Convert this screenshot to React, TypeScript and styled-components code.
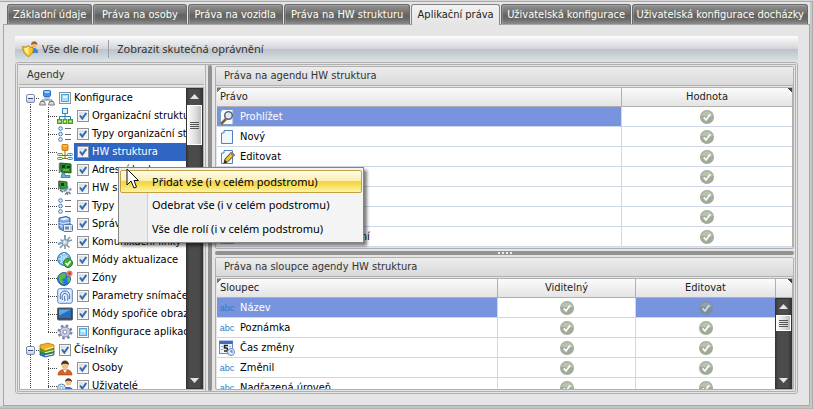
import React, { useEffect, useRef } from "react";
import styled, { createGlobalStyle, css } from "styled-components";

const line = "#b0b0b0";
const gridLine = "#cdd7e8";
const selected = "#7994de";

const GlobalStyle = createGlobalStyle`
  *, *::before, *::after { box-sizing: border-box; }
  body { margin: 0; background: #d2d2d2; }
  body, button, input { font: 11px/14px "DejaVu Sans Condensed", "DejaVu Sans", sans-serif; color: #000; }
  button { border: 0; padding: 0; background: none; }
`;

const Page = styled.div`
  height: 100vh;
  display: flex;
  flex-direction: column;
  padding: 3px 3px 3px;
  background: #e5e5e5;
  border: solid #d6d6d6;
  border-width: 1px 0 0 0;
  box-shadow: inset 0 1px #a9a9a9, inset -1px 0 #a9a9a9, inset 0 -1px #b5b5b5, inset -3px 0 #c8c8c8, inset 0 -3px #c4c4c4;
`;

const Tabs = styled.nav`
  display: flex;
  gap: 1px;
  height: 20px;
  flex: none;
  padding: 0 2px 0 4px;
`;

const Tab = styled.button<{ $weight: number; $active?: boolean }>`
  flex: ${(p) => p.$weight} 1 0;
  min-width: 0;
  white-space: nowrap;
  border: 1px solid #6a6a6a;
  border-bottom: 0;
  border-radius: 3px 3px 0 0;
  color: #fffff2;
  background: linear-gradient(#909090, #777 35%, #626262 55%, #6a6a6a 75%, #8c8c8c);
  box-shadow: inset 1px 1px rgba(255, 255, 255, 0.18);
  ${(p) =>
    p.$active &&
    css`
      margin-bottom: -1px;
      z-index: 1;
      color: #222;
      border-color: #858585;
      background: linear-gradient(#f2f2f2, #e5e5e5);
      box-shadow: none;
    `}
`;

const Content = styled.main`
  flex: 1;
  min-height: 0;
  display: flex;
  flex-direction: column;
  padding: 11px 11px;
  border: 1px solid #a6a6a6;
`;

const Toolbar = styled.div`
  height: 26px;
  flex: none;
  display: flex;
  align-items: center;
  padding: 0 7px;
  background: linear-gradient(#fcfcfc, #d2d4d9 50%, #bbc3cb 51%, #dce4e7);
`;

const ToolButton = styled.button`
  display: flex;
  align-items: center;
  gap: 4px;
  color: #333;
  font: 11px/16px "Noto Sans", sans-serif;
`;

const ToolDivider = styled.span`
  width: 1px;
  height: 18px;
  margin: 0 8px 0 10px;
  background: #98a0a8;
`;

const Split = styled.div`
  flex: 1;
  min-height: 0;
  display: flex;
  border: 3px double ${line};
  border-radius: 3px;
`;

const Sidebar = styled.section`
  width: 188px;
  flex: none;
  display: flex;
  flex-direction: column;
  padding: 1px 1px 1px;
  border-right: 1px solid ${line};
`;

const Caption = styled.h2`
  margin: 0;
  flex: none;
  height: 19px;
  padding: 0 8px;
  font-size: 11px;
  font-weight: normal;
  line-height: 18px;
  color: #333;
  background: linear-gradient(#ececec, #d9d9d9);
  border-bottom: 1px solid ${line};
`;

const VerticalSplitter = styled.div`
  width: 4px;
  flex: none;
  margin: 0 3px 0 2px;
  background: #919191;
  border-radius: 2px;
`;

const HorizontalSplitter = styled.div`
  flex: none;
  height: 4px;
  margin: 2px 0;
  display: flex;
  justify-content: center;
  align-items: center;
  gap: 2px;
  background: #929290;
  border-radius: 2px;
`;

const Grip = styled.i`
  width: 2px;
  height: 2px;
  background: #f0f0f0;
`;

const TreeFrame = styled.div`
  flex: 1;
  min-height: 0;
  display: flex;
  margin-top: 2px;
  border: 1px solid ${line};
  background: #fff;
`;

const Tree = styled.ul`
  flex: 1;
  min-width: 0;
  margin: 0;
  padding: 1px 0 0 1px;
  overflow: hidden;
  list-style: none;
`;

const TreeRow = styled.li`
  display: flex;
  align-items: center;
  height: 18px;
`;

const dots = "repeating-linear-gradient(#444 0 1px, transparent 1px 2px)";
const dotsAcross = "repeating-linear-gradient(90deg, #444 0 1px, transparent 1px 2px)";

const Guide = styled.span<{ $branch?: boolean; $last?: boolean; $first?: boolean }>`
  flex: none;
  width: 18px;
  height: 18px;
  display: grid;
  place-items: center;
  background-repeat: no-repeat;
  background-image: ${dots}, ${(p) => (p.$branch ? dotsAcross : "none")};
  background-size: 1px ${(p) => (p.$last || p.$first ? "9px" : "18px")}, 9px 1px;
  background-position: 9px ${(p) => (p.$first ? "9px" : "0")}, 9px 9px;
`;

const Toggle = styled.button`
  width: 9px;
  height: 9px;
  border: 1px solid #7e8bab;
  border-radius: 2px;
  display: grid;
  place-items: center;
  background: linear-gradient(#fff, #c8cfdd);
  &::after {
    content: "";
    width: 5px;
    height: 1px;
    background: #3d4f7c;
  }
`;

const TreeLabel = styled.label<{ $selected?: boolean }>`
  flex: 1;
  min-width: 0;
  height: 18px;
  margin-left: 1px;
  padding-left: 3px;
  display: flex;
  align-items: center;
  gap: 3px;
  white-space: nowrap;
  overflow: hidden;
  color: ${(p) => (p.$selected ? "#fff" : "#000")};
  background: ${(p) => (p.$selected ? "#2f66c4" : "transparent")};
`;

const CheckWrap = styled.span`
  flex: none;
  display: grid;
  width: 12px;
  height: 12px;
  & > * { grid-area: 1 / 1; }
  & > svg { pointer-events: none; }
`;

const CheckInput = styled.input`
  appearance: none;
  width: 12px;
  height: 12px;
  margin: 0;
  border: 1px solid #8e9298;
  background: linear-gradient(135deg, #d6d8dc, #fbfbfb);
  box-shadow: inset 0 0 0 1px #f6f6f6;
`;

const ScrollBar = styled.div`
  width: 17px;
  flex: none;
  display: flex;
  flex-direction: column;
  align-items: stretch;
  background: linear-gradient(90deg, #3a3a3a, #4b4b4b 15%, #4b4b4b 80%, #353535);
  border: 1px solid #333;
`;

const ArrowButton = styled.button<{ $down?: boolean }>`
  height: 15px;
  flex: none;
  display: grid;
  place-items: center;
  margin-top: ${(p) => (p.$down ? "auto" : "0")};
`;

const Thumb = styled.div<{ $size: number }>`
  height: ${(p) => p.$size}px;
  flex: none;
  display: flex;
  flex-direction: column;
  align-items: center;
  justify-content: center;
  gap: 1px;
  margin-top: 1px;
  border: 1px solid #fff;
  background: linear-gradient(90deg, #fafafa, #dcdcdc 60%, #bdbdbd);
`;

const ThumbLine = styled.i`
  width: 9px;
  height: 1px;
  background: #555;
`;

const Details = styled.div`
  flex: 1;
  min-width: 0;
  display: flex;
  flex-direction: column;
  padding: 1px 1px 1px 0;
`;

const Group = styled.section<{ $fill?: boolean }>`
  flex: ${(p) => (p.$fill ? "1 1 0" : "none")};
  min-height: 0;
  display: flex;
  flex-direction: column;
  padding-bottom: ${(p) => (p.$fill ? 0 : 1)}px;
  border: 1px solid ${line};
  border-radius: 2px;
`;

const TableFrame = styled.div`
  flex: 1;
  min-height: 0;
  display: flex;
  overflow: hidden;
  margin: 1px 0 0 1px;
  border-top: 1px solid ${line};
  border-right: 1px solid ${line};
  background: #fff;
`;

const Table = styled.table`
  flex: 1;
  width: 100%;
  height: max-content;
  border-collapse: separate;
  border-spacing: 0;
  table-layout: fixed;
`;

const headerFill = "linear-gradient(#fbfbfb, #e4e4e4)";

const cornerFill = "linear-gradient(225deg, #444 3px, transparent 3px)";

const Th = styled.th<{ $width?: number; $center?: boolean; $corner?: boolean }>`
  width: ${(p) => (p.$width ? `${p.$width}px` : "auto")};
  height: 19px;
  padding: 0 3px;
  font-weight: normal;
  text-align: ${(p) => (p.$center ? "center" : "left")};
  color: #222;
  background: ${(p) => (p.$corner ? `${cornerFill}, ${headerFill}` : headerFill)};
  border-bottom: 1px solid ${line};
  border-right: 1px solid ${line};
  &:first-child { background: linear-gradient(135deg, #777 3px, transparent 3px), ${headerFill}; }
  &:last-child { border-right: 0; }
`;

const Td = styled.td<{ $selected?: boolean }>`
  height: 20px;
  padding: 0;
  color: ${(p) => (p.$selected ? "#fff" : "#000")};
  background: ${(p) => (p.$selected ? selected : "#fff")};
  border-bottom: 1px solid ${gridLine};
  border-right: 1px solid ${gridLine};
  &:last-child { border-right: 0; }
`;

const NameCell = styled.div`
  display: flex;
  align-items: center;
  gap: 5px;
  padding-left: 2px;
  height: 19px;
  white-space: nowrap;
`;

const StatusCell = styled.div`
  display: flex;
  justify-content: center;
  align-items: center;
  height: 19px;
`;

const ScrollColumn = styled.div`
  flex: none;
  display: flex;
  flex-direction: column;
`;

const ScrollHead = styled.div`
  height: 19px;
  flex: none;
  background: ${cornerFill}, ${headerFill};
  border-left: 1px solid ${line};
  border-bottom: 1px solid ${line};
`;

const ScrollBody = styled.div`
  flex: 1;
  display: flex;
`;

const TypeMark = styled.span`
  width: 16px;
  text-align: center;
  font: 9px/12px "Liberation Sans", sans-serif;
  color: #2f7cc8;
`;

const Menu = styled.div`
  position: absolute;
  left: 118px;
  top: 167px;
  z-index: 5;
  padding: 2px 1px 1px;
  width: 246px;
  border: 1px solid #858585;
  background: linear-gradient(90deg, #ececec 28px, #cfcfcf 28px 29px, #f4f4f4 29px);
  box-shadow: 3px 3px 3px rgba(0, 0, 0, 0.5);
`;

const MenuItem = styled.button<{ $hot?: boolean }>`
  display: block;
  width: 100%;
  height: ${(p) => (p.$hot ? 23 : 24)}px;
  padding-left: 31px;
  text-align: left;
  white-space: nowrap;
  font: 11px/18px "Noto Sans", sans-serif;
  border: 1px solid transparent;
  border-radius: 2px;
  ${(p) =>
    p.$hot &&
    css`
      border-color: #c3a044;
      background: linear-gradient(#fffce8, #fbeeb4 45%, #f3d53c 50%, #f5dc55 65%, #fff3a4);
    `}
`;

const Pointer = styled.svg`
  position: absolute;
  left: 126px;
  top: 168px;
  z-index: 6;
`;

type IconName =
  | "network" | "org" | "types" | "hw" | "board" | "boardTool" | "server" | "links" | "update"
  | "globe" | "finger" | "screen" | "gear" | "books" | "person" | "users" | "roles"
  | "view" | "page" | "edit" | "time";

const drawings: Record<IconName, React.ReactNode> = {
  network: (
    <>
      <path d="M8 7v3M3 12v-2h10v2" stroke="#777" fill="none" />
      <rect x="4.5" y=".5" width="7" height="6" rx="1" fill="#3d93ee" stroke="#2b6dbb" />
      <path d="M5.500 2h5" stroke="#a8d6ff" strokeWidth="2" />
      <path d="M5 8h6" stroke="#b6c8dc" strokeWidth="2" />
      <path d="M1.500 11.500h4l1 3.500h-6zM10.500 11.500h4l1 3.500h-6z" fill="#ddd" stroke="#7b7b7b" />
    </>
  ),
  org: (
    <>
      <path d="M8 5v6M2.500 11V8.500h11V11" fill="none" stroke="#2d7cae" />
      <rect x="5.500" y=".5" width="5" height="5" fill="#dff1ff" stroke="#3583c3" />
      <path d="M.7 11.700h3.600v3.600H.7zM6.200 11.700h3.600v3.600H6.200zM11.700 11.700h3.600v3.600h-3.600z" fill="#e9ffd3" stroke="#4c9e16" strokeWidth="1.400" />
    </>
  ),
  types: (
    <>
      <g fill="#e6f2ff" stroke="#3d77b5">
        <circle cx="3.500" cy="2.500" r="1.800" /><circle cx="3.500" cy="8" r="1.800" /><circle cx="3.500" cy="13.500" r="1.800" />
      </g>
      <path d="M8 2.500h6M8 8.500h6M8 13.500h6" stroke="#6d6d6d" />
    </>
  ),
  hw: (
    <>
      <path d="M8 6v9M4 11.500h8M4 14.500h8" stroke="#8b6b2a" />
      <rect x="5" y=".5" width="6" height="6" rx="1" fill="#f5a21b" stroke="#cd7a08" />
      <path d="M6 2h4" stroke="#ffd685" />
      <rect x=".5" y="9.500" width="5" height="2" rx="1" fill="#e5ffd0" stroke="#4c9e16" />
      <rect x=".5" y="13.500" width="5" height="2" rx="1" fill="#e5ffd0" stroke="#4c9e16" />
      <rect x="10.500" y="9.500" width="5" height="2" rx="1" fill="#cdf5ff" stroke="#2496bb" />
      <rect x="10.500" y="13.500" width="5" height="2" rx="1" fill="#cdf5ff" stroke="#2496bb" />
    </>
  ),
  board: (
    <>
      <path d="M3 1l11 1v9L4 10z" fill="#25872c" stroke="#125e1b" />
      <path d="M5 3h3v3H5zM10 4h3v2h-3z" fill="#0b3e13" />
      <path d="M6 8h6" stroke="#a9db7b" />
      <path d="M2.500 1v10" stroke="#777" strokeWidth="1.500" />
      <path d="M5 11.500h3v2h5v2H4z" fill="#6cadcf" stroke="#3c6684" strokeWidth=".7" />
    </>
  ),
  boardTool: (
    <>
      <path d="M2 1l8 1v7L3 9z" fill="#38993b" stroke="#1b6a26" />
      <path d="M4 3h3v3H4z" fill="#0d4517" />
      <path d="M1.500 1v9" stroke="#777" />
      <path d="M3 10l3 2" stroke="#77a" strokeWidth="2" />
      <path d="M10.500 6v9M6.500 11l8-1.500M8 14.500l6-6M13.500 14l-5-6" stroke="#6d8498" strokeWidth="1.500" />
      <circle cx="11" cy="10.500" r="1.600" fill="#dcebf6" />
    </>
  ),
  server: (
    <>
      <path d="M2 2l7-1.500 4 1.500v11L6 14.500l-4-2z" fill="#7aa7e3" stroke="#39619d" />
      <path d="M2.500 3l4 1.500 6-1.500-4-1.500z" fill="#e6f0ff" />
      <path d="M2.500 6.500l4 1 6-1M2.500 9.500l4 1" stroke="#e1edff" fill="none" />
      <rect x="6.500" y="8.500" width="9" height="7" rx="1" fill="#e9edf4" stroke="#5874a0" />
      <path d="M8 10.500h4v3H8z" fill="#4d92e0" /><path d="M13 11h2M13 13h2" stroke="#e8a23f" />
    </>
  ),
  links: (
    <>
      <path d="M8 1v14M1 10l14-4M3 14l10-11M12.500 13.500l-9-8" stroke="#8496a6" strokeWidth="1.600" />
      <path d="M8 1v3M1 10l3-1" stroke="#63a7df" strokeWidth="2" />
      <circle cx="8" cy="8.500" r="3" fill="#bfd6e8" stroke="#7d95aa" /><circle cx="7.500" cy="8" r="1" fill="#fff" />
    </>
  ),
  update: (
    <>
      <circle cx="7" cy="7" r="6.400" fill="#68b4ea" stroke="#3471ab" />
      <path d="M1 7h12M7 1v12M3 3c3 3 5 3 8 0M3 11c3-3 5-3 8 0M7 1C3 4 3 10 7 13M7 1c4 3 4 9 0 12" fill="none" stroke="#e2f4ff" strokeWidth=".8" />
      <circle cx="11" cy="11" r="4.500" fill="#42ab3a" stroke="#247d25" />
      <path d="M8.500 11l2 2 3-4" stroke="#fff" fill="none" strokeWidth="1.600" />
    </>
  ),
  globe: (
    <>
      <circle cx="7" cy="9" r="6.400" fill="#2676d6" stroke="#1a549e" />
      <path d="M2 6c2-3 5-4 7-2l-1 4-3 1 2 4-2 1C2 12 1 9 2 6zM10 8l3-1v4l-2 2z" fill="#5cb947" />
      <circle cx="12.500" cy="3.500" r="3" fill="#ee7b64" /><circle cx="12.500" cy="3.500" r="1.200" fill="#c62e1c" />
    </>
  ),
  finger: (
    <>
      <rect x=".7" y=".7" width="14.600" height="14.600" rx="2" fill="#e2ecff" stroke="#5580bd" />
      <path d="M3.500 11c-1-5 1-8 4.500-8s5.500 3 4.500 8M5.500 12c-1-4 0-6.500 2.500-6.500s3.500 2.500 2.500 7M8 13c-.7-3-.7-5 0-5" fill="none" stroke="#3d68aa" />
    </>
  ),
  screen: (
    <>
      <rect x=".5" y="2" width="15" height="12" rx="1" fill="#384656" stroke="#56616e" />
      <path d="M2 3.500h12v8.500H2z" fill="#246fc0" /><path d="M2 3.500h12l-12 6z" fill="#63a6e6" />
    </>
  ),
  gear: (
    <>
      <circle cx="8" cy="8" r="6.300" fill="none" stroke="#7882a8" strokeWidth="2.400" strokeDasharray="2.500 2.450" />
      <circle cx="8" cy="8" r="5" fill="#ccd1e8" stroke="#8089ab" /><circle cx="8" cy="8" r="2" fill="#fff" stroke="#7e87ab" />
    </>
  ),
  books: (
    <>
      <path d="M1 9l9-2 5 2v4l-9 2-5-2z" fill="#2b78ba" stroke="#174e83" strokeWidth=".7" />
      <path d="M1 6l9-2 5 2v4l-9 2-5-2z" fill="#53a42e" stroke="#2d6e18" strokeWidth=".7" />
      <path d="M1 3l8-2 6 2v3L6 9 1 6z" fill="#eeb61d" stroke="#a66d0d" strokeWidth=".7" />
      <path d="M6 7.500l8.500-2.500M6 10.700l8.500-2M6 13.800l8.500-2" stroke="#fff6cf" />
    </>
  ),
  person: (
    <>
      <path d="M1 15c0-4 3-5.500 7-5.500s7 1.500 7 5.500z" fill="#d9622b" stroke="#a34018" strokeWidth=".6" />
      <path d="M6 9.500h4L8 13z" fill="#fff" />
      <circle cx="8" cy="5.500" r="3.500" fill="#f5c18b" /><path d="M4 5c0-6 8-6 8 0-2-1-5-2-8 0z" fill="#46342b" />
    </>
  ),
  users: (
    <>
      <path d="M6 13c0-3 2-4 5-4s5 1 5 4z" fill="#2f74c8" />
      <circle cx="11.500" cy="4.500" r="3" fill="#f5c18b" /><path d="M8 4c0-5 7-5 7 0-2-1-4-2-7 0z" fill="#553b26" />
      <circle cx="4.500" cy="10" r="4" fill="#cfe5f6" stroke="#5b8db9" /><circle cx="4.500" cy="10" r="1.500" fill="#fff" stroke="#7fa9cc" />
    </>
  ),
  roles: (
    <>
      <path d="M8 12c0-4 1-5 3.500-5S16 8 16 12z" fill="#3c85d8" />
      <circle cx="12" cy="4" r="2.700" fill="#f4bb80" /><path d="M9 4c0-5 6.500-5 6.500 0-2-1.500-4-1.500-6.500 0z" fill="#a3652a" />
      <path d="M.7 5.500C3 6.500 5 6 6.500 4.500 7.500 6 9 6.500 11 6.500c1 4-1 7-4.500 9C3 14 .5 10 .7 5.500z" fill="#f5c723" stroke="#b8860c" />
      <path d="M2 7c2 0 3-.5 4.500-1.500V14C4 12.500 2.500 10.500 2 7z" fill="#ffec8d" />
    </>
  ),
  view: (
    <>
      <path d="M3.500.5H14v15H1.500V3z" fill="#f5faff" stroke="#7c9fca" />
      <path d="M7 10l-5 5" stroke="#8e572a" strokeWidth="2.500" />
      <circle cx="9.500" cy="6.500" r="3.800" fill="#d5e9f8" stroke="#59636f" strokeWidth="1.500" />
      <path d="M7.500 6c0-1 1-2 2-2" stroke="#fff" fill="none" />
    </>
  ),
  page: <path d="M5 1.500h8.500v13h-11V4H5z" fill="#f1f7ff" stroke="#4e83be" strokeLinejoin="round" />,
  edit: (
    <>
      <path d="M5 1.500h8.500v13h-11V4H5z" fill="#f1f7ff" stroke="#4e83be" strokeLinejoin="round" />
      <path d="M5 14l1-4 6.500-7 3 3L8.500 13z" fill="#efc42a" stroke="#473c46" />
      <path d="M11 4.500l1.500-1.700 3 3L14 7.500z" fill="#8e75c0" /><path d="M5 14l1-3 2 2z" fill="#222" />
    </>
  ),
  time: (
    <>
      <rect x=".5" y="1" width="13" height="12.500" fill="#edf3ff" stroke="#668ac3" />
      <path d="M.5 2.500h13" stroke="#3c6dbe" strokeWidth="3" />
      <path d="M2 6.500h2M10 6.500h2M2 9.500h2" stroke="#90a9d0" />
      <path d="M9 5.500H5.500v2.500H7.500q1 0 1 1.500t-1 1.500H5" fill="none" stroke="#222" strokeWidth="1.500" />
      <circle cx="12" cy="12" r="3.500" fill="#deebff" stroke="#688bbd" /><path d="M12 10v2h2" fill="none" stroke="#456695" />
    </>
  ),
};

const IconSvg = styled.svg`
  flex: none;
  display: block;
`;

const Icon = ({ name }: { name: IconName }) => (
  <IconSvg width="16" height="16" viewBox="0 0 16 16" aria-hidden="true">{drawings[name]}</IconSvg>
);

const Granted = ({ dim }: { dim?: boolean }) => (
  <IconSvg width="14" height="14" viewBox="0 0 14 14" role="img" aria-label="Ano">
    <circle cx="7" cy="7" r="7" fill={dim ? "#7c8f9e" : "#a1ab99"} />
    <path d="M1 6a6.200 6.200 0 0 1 12 0C9 8 5 5 1 6z" fill={dim ? "#91a2ac" : "#b9c1af"} />
    <path d="M3.700 7.400l2.300 2.600 4.200-5.800" fill="none" stroke={dim ? "#d3def4" : "#fff"} strokeWidth="1.700" />
  </IconSvg>
);

function Check({ partial }: { partial?: boolean }) {
  const ref = useRef<HTMLInputElement>(null);
  useEffect(() => {
    if (ref.current) ref.current.indeterminate = !!partial;
  }, [partial]);
  return (
    <CheckWrap>
      <CheckInput ref={ref} type="checkbox" defaultChecked={!partial} />
      <svg width="12" height="12" viewBox="0 0 12 12" aria-hidden="true">
        {partial ? (
          <>
            <rect x="2.500" y="2.500" width="7" height="7" fill="#a5dcfa" stroke="#4ba7e0" />
            <path d="M4 4h4v2H4z" fill="#e4f6ff" />
          </>
        ) : (
          <path d="M3 5.500l2.300 3L9.300 3" fill="none" stroke="#2f69b4" strokeWidth="2" />
        )}
      </svg>
    </CheckWrap>
  );
}

const Arrow = ({ down }: { down?: boolean }) => (
  <svg width="9" height="5" viewBox="0 0 9 5" aria-hidden="true">
    <path d={down ? "M0 0h9L4.500 5z" : "M0 5h9L4.500 0z"} fill="#e4e4e4" />
  </svg>
);

const Scroller = ({ size }: { size: number }) => (
  <ScrollBar>
    <ArrowButton aria-label="Nahoru"><Arrow /></ArrowButton>
    <Thumb $size={size}><ThumbLine /><ThumbLine /><ThumbLine /><ThumbLine /></Thumb>
    <ArrowButton $down aria-label="Dolů"><Arrow down /></ArrowButton>
  </ScrollBar>
);

const tabs: [string, number][] = [
  ["Základní údaje", 85],
  ["Práva na osoby", 93],
  ["Práva na vozidla", 95],
  ["Práva na HW strukturu", 127],
  ["Aplikační práva", 88],
  ["Uživatelská konfigurace", 131],
  ["Uživatelská konfigurace docházky", 177],
];

type Node = { icon: IconName; text: string; root?: boolean; partial?: boolean; selected?: boolean; last?: boolean; first?: boolean };

const nodes: Node[] = [
  { icon: "network", text: "Konfigurace", root: true, partial: true, first: true },
  { icon: "org", text: "Organizační struktura" },
  { icon: "types", text: "Typy organizační struktury" },
  { icon: "hw", text: "HW struktura", selected: true },
  { icon: "board", text: "Adresní body" },
  { icon: "boardTool", text: "HW skupiny" },
  { icon: "types", text: "Typy HW" },
  { icon: "server", text: "Správa serverů" },
  { icon: "links", text: "Komunikační linky" },
  { icon: "update", text: "Módy aktualizace" },
  { icon: "globe", text: "Zóny" },
  { icon: "finger", text: "Parametry snímače" },
  { icon: "screen", text: "Módy spořiče obrazovky" },
  { icon: "gear", text: "Konfigurace aplikace", partial: true, last: true },
  { icon: "books", text: "Číselníky", root: true },
  { icon: "person", text: "Osoby" },
  { icon: "users", text: "Uživatelé" },
];

const rights: [IconName, string][] = [
  ["view", "Prohlížet"],
  ["page", "Nový"],
  ["edit", "Editovat"],
  ["page", "Smazat"],
  ["page", "Kopírovat"],
  ["page", "Tisk"],
  ["screen", "Zobrazit vlastní oprávnění"],
];

const columns: [IconName | null, string][] = [
  [null, "Název"],
  [null, "Poznámka"],
  ["time", "Čas změny"],
  [null, "Změnil"],
  [null, "Nadřazená úroveň"],
];

export default function App() {
  return (
    <>
      <GlobalStyle />
      <Page>
        <Tabs role="tablist">
          {tabs.map(([text, weight]) => (
            <Tab key={text} role="tab" $weight={weight} $active={text === "Aplikační práva"} aria-selected={text === "Aplikační práva"}>
              {text}
            </Tab>
          ))}
        </Tabs>
        <Content>
          <Toolbar role="toolbar">
            <ToolButton><Icon name="roles" />Vše dle rolí</ToolButton>
            <ToolDivider />
            <ToolButton>Zobrazit skutečná oprávnění</ToolButton>
          </Toolbar>
          <Split>
            <Sidebar>
              <Caption>Agendy</Caption>
              <TreeFrame>
                <Tree>
                  {nodes.map((n) => (
                    <TreeRow key={n.text}>
                      <Guide $first={n.first} $branch={n.root}>
                        {n.root && <Toggle aria-label="Sbalit" />}
                      </Guide>
                      {!n.root && <Guide $branch $last={n.last} />}
                      <Icon name={n.icon} />
                      <TreeLabel $selected={n.selected}>
                        <Check partial={n.partial} />
                        {n.text}
                      </TreeLabel>
                    </TreeRow>
                  ))}
                </Tree>
                <Scroller size={40} />
              </TreeFrame>
            </Sidebar>
            <VerticalSplitter />
            <Details>
              <Group>
                <Caption>Práva na agendu HW struktura</Caption>
                <TableFrame>
                  <Table>
                    <thead>
                      <tr>
                        <Th>Právo</Th>
                        <Th $center $corner $width={170}>Hodnota</Th>
                      </tr>
                    </thead>
                    <tbody>
                      {rights.map(([icon, text], i) => (
                        <tr key={text}>
                          <Td $selected={i === 0}><NameCell><Icon name={icon} />{text}</NameCell></Td>
                          <Td><StatusCell><Granted /></StatusCell></Td>
                        </tr>
                      ))}
                    </tbody>
                  </Table>
                </TableFrame>
              </Group>
              <HorizontalSplitter><Grip /><Grip /><Grip /><Grip /></HorizontalSplitter>
              <Group $fill>
                <Caption>Práva na sloupce agendy HW struktura</Caption>
                <TableFrame>
                  <Table>
                    <thead>
                      <tr>
                        <Th>Sloupec</Th>
                        <Th $center $width={138}>Viditelný</Th>
                        <Th $center $width={139}>Editovat</Th>
                      </tr>
                    </thead>
                    <tbody>
                      {columns.map(([icon, text], i) => (
                        <tr key={text}>
                          <Td $selected={i === 0}>
                            <NameCell>{icon ? <Icon name={icon} /> : <TypeMark>abc</TypeMark>}{text}</NameCell>
                          </Td>
                          <Td><StatusCell><Granted /></StatusCell></Td>
                          <Td $selected={i === 0}><StatusCell><Granted dim={i === 0} /></StatusCell></Td>
                        </tr>
                      ))}
                    </tbody>
                  </Table>
                  <ScrollColumn>
                    <ScrollHead />
                    <ScrollBody><Scroller size={16} /></ScrollBody>
                  </ScrollColumn>
                </TableFrame>
              </Group>
            </Details>
          </Split>
        </Content>
        <Menu role="menu">
          <MenuItem role="menuitem" $hot>Přidat vše (i v celém podstromu)</MenuItem>
          <MenuItem role="menuitem">Odebrat vše (i v celém podstromu)</MenuItem>
          <MenuItem role="menuitem">Vše dle rolí (i v celém podstromu)</MenuItem>
        </Menu>
        <Pointer width="13" height="21" viewBox="0 0 13 21" aria-hidden="true">
          <path d="M1 1v16l4-4 3 7 2.500-1L8 12.500h4.500z" fill="#fff" stroke="#111" />
        </Pointer>
      </Page>
    </>
  );
}
